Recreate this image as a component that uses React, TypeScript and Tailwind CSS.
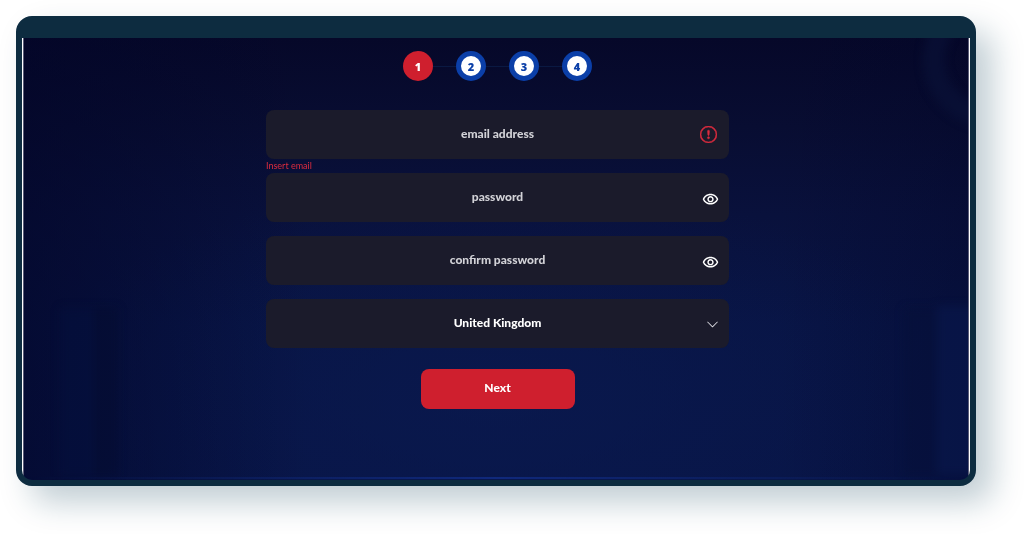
import { useState } from "react";
import type { ReactNode } from "react";
import { BsChevronDown, BsExclamationCircle } from "react-icons/bs";
import { MdOutlineVisibility } from "react-icons/md";

const STEPS = [1, 2, 3, 4];
const COUNTRIES = ["United Kingdom", "Ireland", "Malta"];
const CONTROL =
  "peer block h-[49px] w-full rounded-lg bg-[#1b1b2b] px-10 pb-[2px] text-center text-xs font-black text-white outline-none";
const FLOATING_LABEL =
  "pointer-events-none absolute inset-0 hidden items-center justify-center pb-[2px] text-xs font-black text-[#d2d2d7] peer-placeholder-shown:flex";

function Backdrop() {
  return (
    <svg
      aria-hidden="true"
      className="absolute inset-0 h-full w-full"
      viewBox="0 0 944 442"
      preserveAspectRatio="none"
    >
      <defs>
        <linearGradient id="sky" x1="0" y1="0" x2="0" y2="1">
          <stop offset="0" stopColor="#060829" />
          <stop offset="0.2" stopColor="#080d32" />
          <stop offset="0.4" stopColor="#09113c" />
          <stop offset="0.65" stopColor="#081444" />
          <stop offset="1" stopColor="#081547" />
        </linearGradient>
        <radialGradient id="glow" cx="0.5" cy="0.82" r="0.5">
          <stop offset="0" stopColor="#0a1a50" stopOpacity="0.7" />
          <stop offset="1" stopColor="#0a1a50" stopOpacity="0" />
        </radialGradient>
        <linearGradient id="edge" x1="0" y1="0" x2="1" y2="0">
          <stop offset="0" stopColor="#020528" stopOpacity="0.6" />
          <stop offset="0.3" stopColor="#020528" stopOpacity="0" />
          <stop offset="0.8" stopColor="#020528" stopOpacity="0" />
          <stop offset="1" stopColor="#020528" stopOpacity="0.3" />
        </linearGradient>
        <linearGradient id="floor" x1="0" y1="0" x2="1" y2="0">
          <stop offset="0" stopColor="#0d2268" stopOpacity="0" />
          <stop offset="0.5" stopColor="#10297c" />
          <stop offset="1" stopColor="#0d2268" stopOpacity="0" />
        </linearGradient>
        <filter id="soft" colorInterpolationFilters="sRGB">
          <feGaussianBlur stdDeviation="4" />
        </filter>
      </defs>
      <rect width="944" height="442" fill="url(#sky)" />
      <rect width="944" height="442" fill="url(#glow)" />
      <rect width="944" height="442" fill="url(#edge)" />
      <g filter="url(#soft)">
        <circle cx="966" cy="22" r="56" fill="none" stroke="#0a1338" strokeWidth="22" opacity="0.6" />
        <rect x="36" y="270" width="34" height="168" fill="#03103e" opacity="0.5" />
        <rect x="70" y="270" width="24" height="168" fill="#030c30" opacity="0.5" />
        <rect x="880" y="270" width="32" height="168" fill="#05103a" opacity="0.5" />
        <rect x="913" y="268" width="40" height="168" fill="#08174a" opacity="0.7" />
      </g>
      <rect y="439" width="944" height="2" fill="url(#floor)" />
    </svg>
  );
}

function Stepper({ current }: { current: number }) {
  return (
    <ol className="flex items-center font-['Open_Sans',sans-serif] text-[11px] leading-none font-extrabold">
      {STEPS.map((step) => (
        <li key={step} className="flex items-center">
          {step > 1 && <span className="h-px w-[23px] bg-[#0a1942]" />}
          <span
            aria-current={step === current ? "step" : undefined}
            className={
              step === current
                ? "flex size-[30px] items-center justify-center rounded-full bg-[#cf1f2e] text-white"
                : "flex size-[30px] items-center justify-center rounded-full border-5 border-[#0b3fa8] bg-white text-[#0b3fa8]"
            }
          >
            {step}
          </span>
        </li>
      ))}
    </ol>
  );
}

type FieldProps = { error?: string; errorId?: string; icon: ReactNode; children: ReactNode };

function Field({ error, errorId, icon, children }: FieldProps) {
  return (
    <div>
      <div className="relative">
        {children}
        {icon}
      </div>
      <p id={errorId} className="h-[14px] text-[9px] leading-[14px] text-[#dc2c3e]">
        {error}
      </p>
    </div>
  );
}

function PasswordField({ id, label }: { id: string; label: string }) {
  const [visible, setVisible] = useState(false);
  return (
    <Field
      icon={
        <button
          type="button"
          aria-label={`Show ${label}`}
          onClick={() => setVisible(!visible)}
          className="absolute inset-y-0 right-[10px] flex items-center pt-1 text-white"
        >
          <MdOutlineVisibility size={17} />
        </button>
      }
    >
      <input id={id} type={visible ? "text" : "password"} placeholder=" " className={CONTROL} />
      <label htmlFor={id} className={FLOATING_LABEL}>
        {label}
      </label>
    </Field>
  );
}

export default function App() {
  return (
    <main className="flex min-h-screen bg-white pt-4 pr-12 pb-12 pl-4 font-['Lato',sans-serif]">
      <div className="flex flex-1 overflow-hidden rounded-2xl border-6 border-t-22 border-[#0d2c40] bg-[#0d2c40] shadow-[16px_16px_32px_rgba(13,60,84,0.26)]">
        <section className="flex flex-1 border-x border-white">
          <div className="relative flex flex-1 flex-col items-center border-x border-[#5b5d78] pt-[13px] pb-6 pl-[3px]">
            <Backdrop />
            <div className="relative flex w-full flex-col items-center">
              <Stepper current={1} />
              <form
                noValidate
                onSubmit={(event) => event.preventDefault()}
                className="mt-[29px] flex w-full max-w-[463px] flex-col"
              >
                <Field
                  error="Insert email"
                  errorId="email-error"
                  icon={
                    <BsExclamationCircle
                      size={17}
                      strokeWidth={0.5}
                      className="pointer-events-none absolute top-4 right-3 text-[#dc2c3e]"
                    />
                  }
                >
                  <input
                    id="email"
                    type="email"
                    placeholder=" "
                    aria-invalid="true"
                    aria-describedby="email-error"
                    className={CONTROL}
                  />
                  <label htmlFor="email" className={FLOATING_LABEL}>
                    email address
                  </label>
                </Field>
                <PasswordField id="password" label="password" />
                <PasswordField id="confirm-password" label="confirm password" />
                <Field
                  icon={
                    <BsChevronDown
                      size={13}
                      className="pointer-events-none absolute top-[19px] right-[10px] text-[#e4e4ea]"
                    />
                  }
                >
                  <select
                    id="country"
                    aria-label="country"
                    className={`${CONTROL} appearance-none [text-align-last:center]`}
                  >
                    {COUNTRIES.map((country) => (
                      <option key={country}>{country}</option>
                    ))}
                  </select>
                </Field>
                <button
                  type="submit"
                  className="mt-[7px] h-10 w-[154px] self-center rounded-lg bg-[#cf1f2e] pb-[2px] text-xs font-black text-white"
                >
                  Next
                </button>
              </form>
            </div>
          </div>
        </section>
      </div>
    </main>
  );
}
